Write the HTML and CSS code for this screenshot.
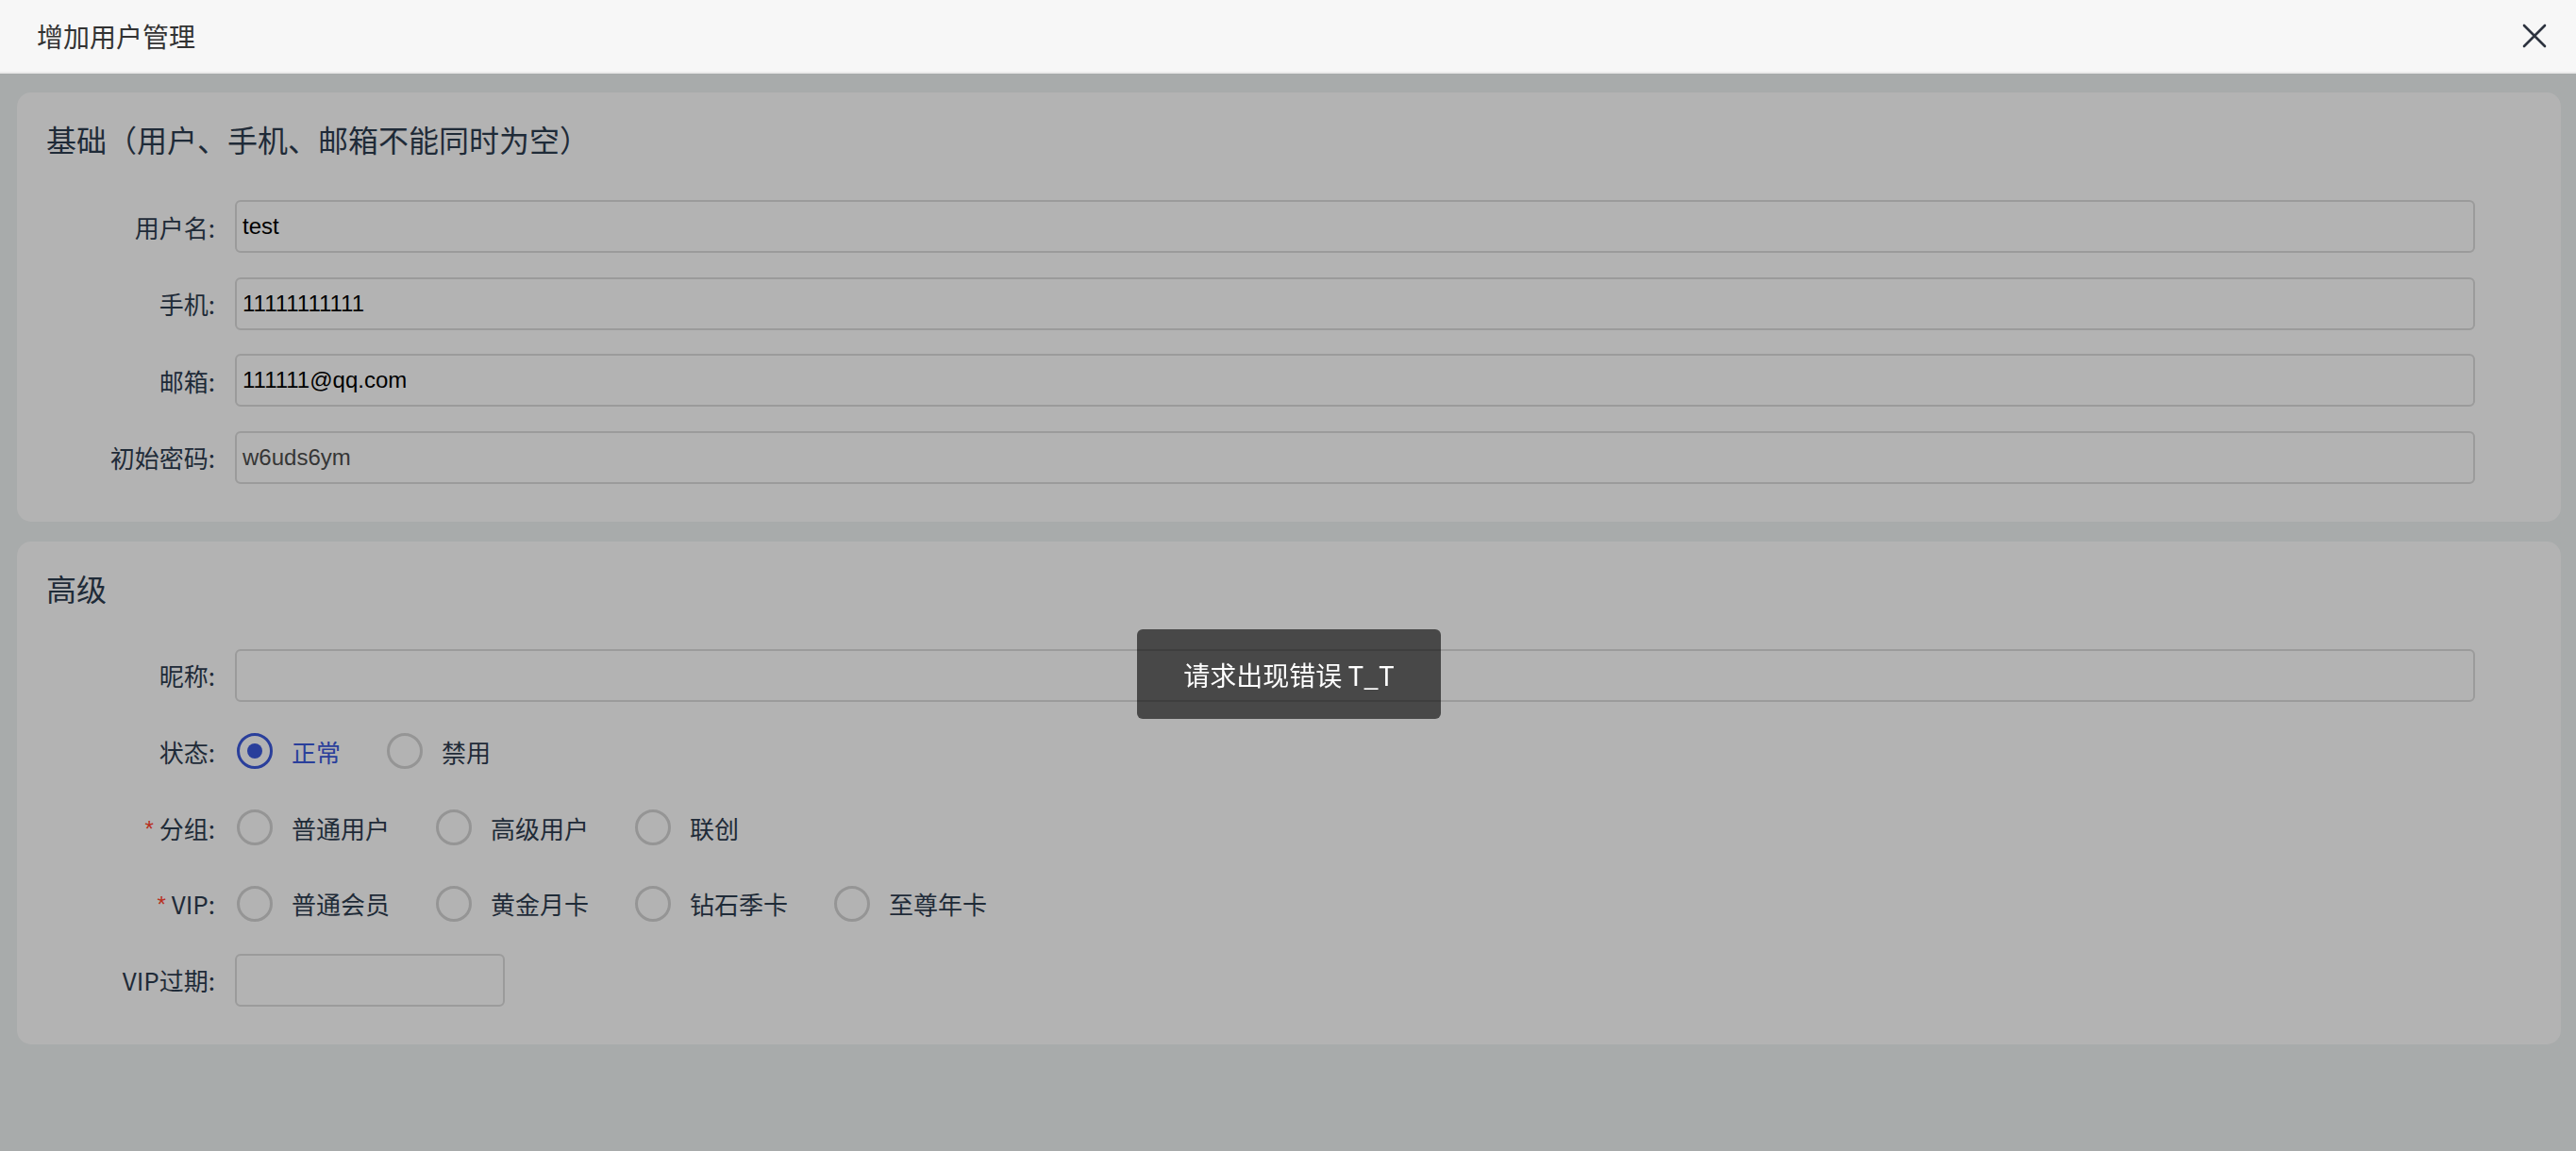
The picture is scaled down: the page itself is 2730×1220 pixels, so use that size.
FILE: index.html
```html
<!DOCTYPE html>
<html lang="zh-CN">
<head>
<meta charset="utf-8">
<title>增加用户管理</title>
<link rel="stylesheet" href="styles.css">
</head>
<body>
<header class="topbar">
  <div class="topbar-title">增加用户管理</div>
  <button class="close-btn" aria-label="close">
    <svg width="26" height="26" viewBox="0 0 26 26"><path d="M2 2 L24 24 M24 2 L2 24" stroke="#2d333f" stroke-width="2.6" stroke-linecap="round" fill="none"/></svg>
  </button>
</header>

<main class="content">
  <section class="card card-basic">
    <h2 class="card-title">基础（用户、手机、邮箱不能同时为空）</h2>
    <div class="rows">
      <div class="row"><label class="lbl">用户名:</label><div class="input">test</div></div>
      <div class="row"><label class="lbl">手机:</label><div class="input">11111111111</div></div>
      <div class="row"><label class="lbl">邮箱:</label><div class="input">111111@qq.com</div></div>
      <div class="row"><label class="lbl">初始密码:</label><div class="input input-muted">w6uds6ym</div></div>
    </div>
  </section>

  <section class="card card-adv">
    <h2 class="card-title">高级</h2>
    <div class="rows rows-adv">
      <div class="row"><label class="lbl">昵称:</label><div class="input"></div></div>
      <div class="row">
        <label class="lbl">状态:</label>
        <div class="radios">
          <span class="opt checked"><span class="dot"></span><span class="txt">正常</span></span>
          <span class="opt"><span class="dot"></span><span class="txt">禁用</span></span>
        </div>
      </div>
      <div class="row">
        <label class="lbl"><span class="req">*</span>分组:</label>
        <div class="radios">
          <span class="opt"><span class="dot"></span><span class="txt">普通用户</span></span>
          <span class="opt"><span class="dot"></span><span class="txt">高级用户</span></span>
          <span class="opt"><span class="dot"></span><span class="txt">联创</span></span>
        </div>
      </div>
      <div class="row">
        <label class="lbl"><span class="req">*</span>VIP:</label>
        <div class="radios">
          <span class="opt"><span class="dot"></span><span class="txt">普通会员</span></span>
          <span class="opt"><span class="dot"></span><span class="txt">黄金月卡</span></span>
          <span class="opt"><span class="dot"></span><span class="txt">钻石季卡</span></span>
          <span class="opt"><span class="dot"></span><span class="txt">至尊年卡</span></span>
        </div>
      </div>
      <div class="row"><label class="lbl">VIP过期:</label><div class="input input-short"></div></div>
    </div>
  </section>
</main>

<div class="toast">请求出现错误 T_T</div>
</body>
</html>
```

FILE: styles.css
```css
html, body {
  margin: 0;
  padding: 0;
}
body {
  background: #a8abab;
  font-family: "Liberation Sans", "Noto Sans CJK SC", sans-serif;
  width: 2730px;
  height: 1220px;
  overflow: hidden;
}

.topbar {
  height: 76px;
  background: #f7f7f7;
  border-bottom: 2px solid #ebebeb;
  display: flex;
  align-items: center;
  justify-content: space-between;
  padding: 0 31px 0 39px;
}
.topbar-title {
  font-family: "Noto Sans CJK SC", sans-serif;
  font-size: 28px;
  color: #333;
  line-height: 1;
}
.close-btn {
  border: 0;
  background: none;
  padding: 0;
  width: 26px;
  height: 26px;
  display: flex;
}

.content {
  padding: 20px 16px 0 18px;
}
.card {
  background: #b3b3b3;
  border-radius: 15px;
  padding: 27px 91px 40px 0;
  margin-bottom: 21px;
}
.card-title {
  margin: 0 0 43px 31px;
  font-family: "Noto Sans CJK SC", sans-serif;
  font-weight: 400;
  font-size: 32px;
  line-height: 44px;
  color: #1f2b38;
}
.rows {
  display: flex;
  flex-direction: column;
  gap: 25.5px;
}
.rows-adv {
  gap: 24.75px;
}
.row {
  display: flex;
  align-items: center;
  height: 56px;
}
.lbl {
  width: 210px;
  flex: none;
  text-align: right;
  margin-right: 21px;
  font-family: "Noto Sans CJK SC", sans-serif;
  font-size: 26px;
  color: #1f2b38;
}
.req {
  color: #b8301f;
  font-family: "Liberation Sans", sans-serif;
  font-size: 24px;
  margin-right: 6px;
  position: relative;
  top: -2px;
}
.input {
  flex: 1;
  height: 56px;
  box-sizing: border-box;
  border: 2px solid #9b9b9b;
  border-radius: 6px;
  padding-left: 6px;
  display: flex;
  align-items: center;
  font-family: "Liberation Sans", sans-serif;
  font-size: 24px;
  color: #000;
}
.input-muted {
  color: #363636;
}
.input-short {
  flex: none;
  width: 286px;
}

.radios {
  display: flex;
  align-items: center;
  padding-left: 2px;
}
.opt {
  display: flex;
  align-items: center;
  margin-right: 49px;
}
.dot {
  width: 38px;
  height: 38px;
  box-sizing: border-box;
  border: 3px solid #959595;
  border-radius: 50%;
  margin-right: 20px;
  display: flex;
  align-items: center;
  justify-content: center;
}
.opt.checked .dot {
  border-color: #2a3f9b;
}
.opt.checked .dot::after {
  content: "";
  width: 16px;
  height: 16px;
  border-radius: 50%;
  background: #2a3f9b;
}
.txt {
  font-family: "Noto Sans CJK SC", sans-serif;
  font-size: 26px;
  color: #1f2b38;
}
.opt.checked .txt {
  color: #2a3f9b;
}

.toast {
  position: fixed;
  left: 1205px;
  top: 667px;
  width: 322px;
  height: 95px;
  border-radius: 6px;
  background: rgba(0, 0, 0, 0.6);
  color: #fff;
  display: flex;
  align-items: center;
  justify-content: center;
  font-family: "Noto Sans CJK SC", sans-serif;
  font-size: 28px;
}
```
